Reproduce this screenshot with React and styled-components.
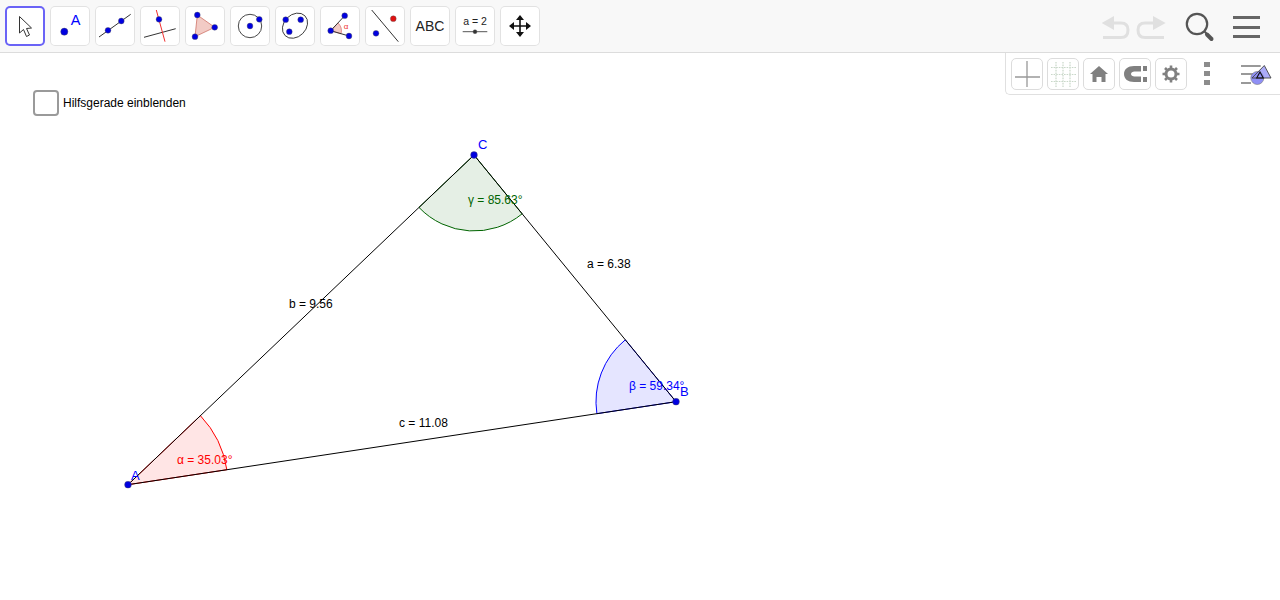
import React from "react";
import styled, { createGlobalStyle } from "styled-components";

const GlobalStyle = createGlobalStyle`
  html, body {
    margin: 0;
    height: 100%;
    background: #fff;
    font-family: "Liberation Sans", Arial, sans-serif;
    overflow: hidden;
  }
`;

const BLUE = "#0000e0";
const WEDGE = "#d9695a";

const Dot = ({ x, y, r = 2.9, c = BLUE }) => (
  <circle cx={x} cy={y} r={r} fill={c} stroke="#555" strokeWidth="0.4" />
);

const Ln = ({ x1, y1, x2, y2, c = "#333" }) => (
  <line x1={x1} y1={y1} x2={x2} y2={y2} stroke={c} strokeWidth="1" />
);

const Glyph = ({ x, y, size, fill, children }) => (
  <text x={x} y={y} fontSize={size} fill={fill} textAnchor="middle" fontFamily="Liberation Sans, Arial, sans-serif">
    {children}
  </text>
);

const toolIcons = [
  <path key="a" d="M14.5 10.5 L14.5 27 L18.5 23.5 L21.5 30.5 L24.5 29 L21.5 22.5 L26.5 22 Z" fill="#fff" stroke="#333" strokeWidth="1" />,
  <g key="b">
    <Dot x={14.3} y={25.7} r={3.6} />
    <Glyph x={25.7} y={19} size={14.5} fill="#0000ff">A</Glyph>
  </g>,
  <g key="c">
    <Ln x1={4} y1={31} x2={35.7} y2={8.3} />
    <Dot x={13} y={24.3} />
    <Dot x={26.3} y={15} />
  </g>,
  <g key="d">
    <Ln x1={4} y1={31.3} x2={35.7} y2={22.7} />
    <Ln x1={16.3} y1={4} x2={25} y2={35.7} c="#f03030" />
    <Dot x={19} y={13.3} />
  </g>,
  <g key="e">
    <path d="M12.3 9 L29.7 21.3 L10 30.7 Z" fill={WEDGE} fillOpacity="0.35" stroke="#cf7468" strokeWidth="0.8" />
    <Dot x={12.3} y={9} />
    <Dot x={29.7} y={21.3} />
    <Dot x={10} y={30.7} />
  </g>,
  <g key="f">
    <circle cx="20" cy="20" r="11.7" fill="none" stroke="#333" strokeWidth="0.9" />
    <Dot x={20} y={20} />
    <Dot x={29.3} y={13.3} />
  </g>,
  <g key="g">
    <ellipse cx="20" cy="19.7" rx="14" ry="11" transform="rotate(-45 20 19.7)" fill="none" stroke="#333" strokeWidth="0.9" />
    <Dot x={10.7} y={13.7} />
    <Dot x={25.7} y={13.7} />
    <Dot x={14.3} y={25.7} />
  </g>,
  <g key="h">
    <path d="M10.7 24.7 L18 17 A11 11 0 0 1 21 27.8 Z" fill={WEDGE} fillOpacity="0.35" stroke="#d05050" strokeWidth="0.6" />
    <Ln x1={10.7} y1={24.7} x2={24.7} y2={9.7} />
    <Ln x1={10.7} y1={24.7} x2={29} y2={30} />
    <Dot x={10.7} y={24.7} />
    <Dot x={24.7} y={9.7} />
    <Dot x={29} y={30} />
    <Glyph x={26} y={23} size={8} fill="#f03030">α</Glyph>
  </g>,
  <g key="i">
    <Ln x1={6.7} y1={4} x2={33.3} y2={35.7} />
    <Dot x={11} y={27.3} />
    <Dot x={28.3} y={12.7} c="#e01010" />
  </g>,
  <Glyph key="j" x={20} y={25} size={14} fill="#222">ABC</Glyph>,
  <g key="k">
    <Glyph x={20} y={19} size={10.5} fill="#222">a = 2</Glyph>
    <Ln x1={7.7} y1={25.7} x2={32.3} y2={25.7} c="#555" />
    <Dot x={20} y={25.7} r={2} c="#333" />
  </g>,
  <g key="l" fill="#111">
    <path d="M11 20 H29 M20 11 V29" fill="none" stroke="#111" strokeWidth="1.6" />
    <path d="M20 9 L24 14 H16 Z M20 31 L24 26 H16 Z M9 20 L14 16 V24 Z M31 20 L26 16 V24 Z" />
  </g>,
];

const styleIcons = [
  <path key="a" d="M16 3 V29 M4 19 H29" stroke="#999" strokeWidth="1.3" fill="none" />,
  <path key="b" d="M9 4 V29 M16 4 V29 M23 4 V29 M4 9.5 H29 M4 16.5 H29 M4 23.5 H29" stroke="#c9d8c9" strokeWidth="1.2" strokeDasharray="1.6 1" fill="none" />,
  <path key="c" d="M16 8 L25 16 H22.5 V24 H18.5 V19 H13.5 V24 H9.5 V16 H7 Z" fill="#808080" />,
  <g key="d" fill="#808080">
    <path d="M22 8 H15 C9 8 5 11 5 16 C5 21 9 24 15 24 H22 V18.5 H15.5 C13.5 18.5 12 17.5 12 16 C12 14.5 13.5 13.5 15.5 13.5 H22 Z" />
    <path d="M24 8 H28 V13 H24 Z M24 19 H28 V24 H24 Z" />
  </g>,
  <g key="e" fill="none" stroke="#808080">
    <circle cx="16" cy="16" r="5" strokeWidth="3" />
    <path d="M16 7.5 V11 M16 21 V24.5 M7.5 16 H11 M21 16 H24.5 M10 10 L12.5 12.5 M19.5 19.5 L22 22 M22 10 L19.5 12.5 M12.5 19.5 L10 22" strokeWidth="2.6" />
  </g>,
];

const triangle = { A: [128, 484.7], B: [676, 401.7], C: [474, 155] };

// sector at vertex v, clockwise from the side towards p to the side towards q
const sector = (v, p, q, r) => {
  const onSide = (t) => {
    const dx = t[0] - v[0];
    const dy = t[1] - v[1];
    const l = Math.hypot(dx, dy);
    return [v[0] + (dx / l) * r, v[1] + (dy / l) * r];
  };
  return `M${v} L${onSide(p)} A${r} ${r} 0 0 1 ${onSide(q)} Z`;
};

const angles = [
  { d: sector(triangle.A, triangle.C, triangle.B, 100), color: "#ff0000" },
  { d: sector(triangle.B, triangle.A, triangle.C, 80), color: "#0000ff" },
  { d: sector(triangle.C, triangle.B, triangle.A, 76), color: "#006400" },
];

const labels = [
  { x: 289, y: 308, text: "b = 9.56", color: "#000" },
  { x: 587, y: 268, text: "a = 6.38", color: "#000" },
  { x: 399, y: 427, text: "c = 11.08", color: "#000" },
  { x: 177, y: 464, text: "α = 35.03°", color: "#ff0000" },
  { x: 629, y: 390, text: "β = 59.34°", color: "#0000ff" },
  { x: 468, y: 204, text: "γ = 85.63°", color: "#006400" },
  { x: 131, y: 480, text: "A", color: "#0000ff", big: true },
  { x: 680, y: 396, text: "B", color: "#0000ff", big: true },
  { x: 478, y: 149, text: "C", color: "#0000ff", big: true },
];

function App() {
  return (
    <Page>
      <GlobalStyle />
      <Toolbar>
        <Tools>
          {toolIcons.map((icon, i) => (
            <ToolButton key={i} $active={i === 0}>
              <svg width="40" height="40" viewBox="0 0 40 40">{icon}</svg>
            </ToolButton>
          ))}
        </Tools>
        <Actions>
          <svg width="66" height="28" viewBox="0 0 66 28" fill="none" stroke="#e0e0e0" strokeWidth="3">
            <path d="M10 10 H20 C25 10 27 13 27 17 C27 22 25 24.5 20 24.5 H2" />
            <path d="M0.7 10 L13 3 V17 Z" fill="#e0e0e0" stroke="none" />
            <path d="M55 10 H44 C39 10 37 13 37 17 C37 22 39 24.5 44 24.5 H63" />
            <path d="M64.7 10 L52 3 V17 Z" fill="#e0e0e0" stroke="none" />
          </svg>
          <svg width="32" height="32" viewBox="0 0 32 32" fill="none" stroke="#555">
            <circle cx="13" cy="13" r="10.2" strokeWidth="2.2" />
            <path d="M20 20 L23 23" strokeWidth="2" />
            <path d="M23 23.5 L27.5 28" strokeWidth="4" strokeLinecap="round" />
          </svg>
          <Burger><span /><span /><span /></Burger>
        </Actions>
      </Toolbar>
      <Canvas>
        <Drawing width="1280" height="547" viewBox="0 53 1280 547">
          {angles.map((a) => (
            <path key={a.color} d={a.d} fill={a.color} fillOpacity="0.1" stroke={a.color} strokeWidth="1" />
          ))}
          <polygon
            points={`${triangle.A} ${triangle.B} ${triangle.C}`}
            fill="none"
            stroke="#000"
            strokeWidth="1"
          />
          {Object.values(triangle).map((p, i) => (
            <circle key={i} cx={p[0]} cy={p[1]} r="3.4" fill="#0000e0" stroke="#555" strokeWidth="0.4" />
          ))}
          {labels.map((l) => (
            <Label key={l.text} x={l.x} y={l.y} fill={l.color} $big={l.big}>{l.text}</Label>
          ))}
        </Drawing>
        <CheckRow>
          <CheckBox />
          <CheckText>Hilfsgerade einblenden</CheckText>
        </CheckRow>
        <StyleBar>
          {styleIcons.map((icon, i) => (
            <StyleButton key={i}>
              <svg width="32" height="32" viewBox="0 0 32 32">{icon}</svg>
            </StyleButton>
          ))}
          <MoreDots><i /><i /><i /></MoreDots>
          <svg width="34" height="28" viewBox="0 0 34 28">
            <path d="M2 6 H21.7 M2 14 H14 M2 23 H12" stroke="#999" strokeWidth="2.2" />
            <circle cx="18.3" cy="18" r="6.5" fill="#8f8ff5" stroke="#777" strokeWidth="0.6" />
            <path d="M25.3 5.5 L32 18 H13 Z" fill="#8f8ff5" fillOpacity="0.75" stroke="#444" strokeWidth="0.9" />
            <path d="M21 12 L24.3 18 H17.7 Z" fill="none" stroke="#111" strokeWidth="1.1" />
          </svg>
        </StyleBar>
      </Canvas>
    </Page>
  );
}

const Page = styled.div`
  width: 1280px;
  height: 600px;
  display: flex;
  flex-direction: column;
  overflow: hidden;
`;

const Toolbar = styled.header`
  height: 52px;
  flex: none;
  display: flex;
  justify-content: space-between;
  align-items: flex-start;
  background: #f8f8f8;
  border-bottom: 1px solid #dcdcdc;
`;

const Tools = styled.div`
  display: flex;
  gap: 5px;
  padding: 6px 0 0 5px;
`;

const ToolButton = styled.div`
  width: 40px;
  height: 40px;
  box-sizing: border-box;
  background: #fff;
  border-radius: 5px;
  box-shadow: inset 0 0 0 ${(p) => (p.$active ? "2px #6a63f6" : "1px #e2e2e2")};

  svg {
    display: block;
  }
`;

const Actions = styled.div`
  display: flex;
  align-items: center;
  padding: 11px 20px 0 0;
  gap: 17px;
`;

const Burger = styled.div`
  width: 27px;
  display: flex;
  flex-direction: column;
  gap: 6.5px;

  span {
    height: 3px;
    background: #666;
  }
`;

const Canvas = styled.main`
  position: relative;
  flex: 1;
  padding: 37px 0 0 33px;
`;

const Drawing = styled.svg`
  position: absolute;
  left: 0;
  top: 0;
`;

const Label = styled.text`
  font-size: ${(p) => (p.$big ? "13px" : "12px")};
  font-family: "Liberation Sans", Arial, sans-serif;
`;

const CheckRow = styled.label`
  position: relative;
  display: flex;
  align-items: center;
  gap: 4px;
`;

const CheckBox = styled.span`
  width: 26px;
  height: 26px;
  box-sizing: border-box;
  border: 2px solid #9a9a9a;
  border-radius: 4px;
  background: #fff;
`;

const CheckText = styled.span`
  font-size: 12px;
  line-height: 14px;
  margin-top: -1px;
  color: #000;
`;

const StyleBar = styled.div`
  position: absolute;
  top: 0;
  right: 0;
  width: 275px;
  height: 42px;
  box-sizing: border-box;
  padding: 5px 7px 5px 5px;
  display: flex;
  align-items: center;
  gap: 4px;
  background: #fff;
  border-left: 1px solid #e0e0e0;
  border-bottom: 1px solid #e0e0e0;
  border-bottom-left-radius: 5px;
`;

const StyleButton = styled.div`
  width: 32px;
  height: 32px;
  box-sizing: border-box;
  border: 1px solid #dcdcdc;
  border-radius: 5px;

  svg {
    display: block;
    margin: -1px;
  }
`;

const MoreDots = styled.div`
  width: 6px;
  margin: 0 auto 0 13px;
  display: flex;
  flex-direction: column;
  gap: 3.5px;

  i {
    height: 5.5px;
    background: #8c8c8c;
  }
`;

export default App;
